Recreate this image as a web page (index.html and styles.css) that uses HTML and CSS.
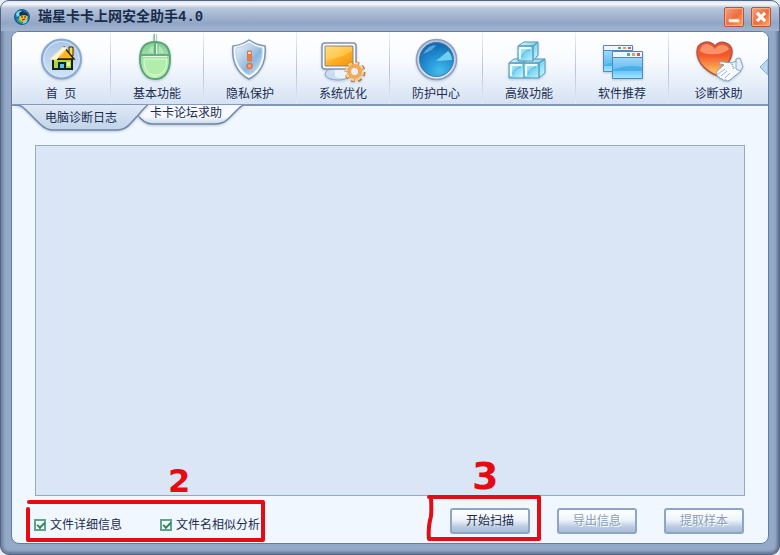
FILE: index.html
```html
<!DOCTYPE html>
<html lang="zh-CN">
<head>
  <meta charset="UTF-8" />
  <title>瑞星卡卡上网安全助手4.0</title>
  <link rel="stylesheet" href="styles.css">
</head>
<body>
  <div class="window">
    <header class="titlebar">
      <svg class="logo" viewBox="0 0 16 16">
        <circle cx="8" cy="8" r="7.5" fill="#1672b4" stroke="#175985" />
        <path d="M2 5Q4 1 8 2L6 6 3 8zM10 12l4-2-2 4-4 1z" fill="#65e5ef" />
        <path d="M5 8l3-3 4 1 2 2-2 4-4 1-3-2z" fill="#f0ba35" />
        <path d="M5 4l3-2 5 2 1 3-4-1-4 1z" fill="#17354a" />
        <path d="M3 10l4 1 1 3-3-1z" fill="#55bd4b" />
        <path d="M8 7v2M11 7v2M8 11l3-1" stroke="#4b2c17" />
      </svg>
      <h1>瑞星卡卡上网安全助手4.0</h1>
      <div class="win-buttons">
        <button type="button" aria-label="最小化">
          <svg viewBox="0 0 20 20"><path d="M4.5 12.500h11v3h-11z" fill="#fff" stroke="#ffd8b8" /></svg>
        </button>
        <button type="button" aria-label="关闭">
          <svg viewBox="0 0 20 20"><path d="M5.500 5.500l9 9M14.500 5.500l-9 9" stroke="#fff" stroke-width="3.500" /></svg>
        </button>
      </div>
    </header>

    <main class="panel">
      <nav class="toolbar">
        <a href="#home">
          <svg viewBox="0 0 50 50">
            <defs>
              <linearGradient id="ball" x2="0" y2="1"><stop stop-color="#a9c4e5" /><stop offset="1" stop-color="#d0e4fb" /></linearGradient>
            </defs>
            <circle cx="25.500" cy="27" r="19.500" fill="url(#ball)" stroke="#8ca8d0" stroke-width="2" />
            <circle cx="25.500" cy="27" r="17.500" fill="none" stroke="#d5e7fa" />
            <path d="M17 27h19v10H17z" fill="#a7da3c" stroke="#17210e" stroke-width="2" />
            <path d="M33 15h4v9h-4z" fill="#ffdc32" stroke="#35260b" />
            <path d="M28 15l10 12H21z" fill="#ffb71c" stroke="#2d250d" stroke-width="1.500" />
            <path d="M14 27l13-12 4 1-11 12z" fill="#fff5ce" stroke="#efe2bb" />
            <path d="M23 31h6v6h-6z" fill="#5cc2ed" stroke="#14202a" stroke-width="2" />
            <path d="M31 30h3v4h-3z" fill="#ecf99b" />
          </svg>
          <span>首&nbsp; 页</span>
        </a>
        <a href="#basic">
          <svg viewBox="0 0 50 50">
            <defs>
              <linearGradient id="mouse" x2="0" y2="1"><stop stop-color="#83cd99" /><stop offset="1" stop-color="#c9f6bf" /></linearGradient>
            </defs>
            <path d="M23 2v13" stroke="#8cb8a0" stroke-width="3" /><path d="M23.500 2v13" stroke="#e6fbed" />
            <path d="M8 27C8 15 14 10 23 10s15 5 15 17c0 13-6 20-15 20S8 39 8 27z" fill="url(#mouse)" stroke="#5ba676" stroke-width="2" />
            <path d="M12 27h23c0 11-5 16-12 16s-11-5-11-16z" fill="#b1eeac" stroke="#d7ffd0" />
            <path d="M9 23h28M23 11v12" stroke="#6aad7e" stroke-width="2" />
            <path d="M11 24.500h24M24.500 12v10" stroke="#eaffe8" />
            <path d="M16 20q1-5 5-6v7zM27 14q4 2 5 7h-5z" fill="#b9efbe" opacity=".7" />
          </svg>
          <span>基本功能</span>
        </a>
        <a href="#privacy">
          <svg viewBox="0 0 50 50">
            <defs>
              <linearGradient id="shield" x2="1" y2="1"><stop stop-color="#edf5fb" /><stop offset=".45" stop-color="#a8c7e4" /><stop offset=".6" stop-color="#8bb7df" /><stop offset="1" stop-color="#d1e9fa" /></linearGradient>
            </defs>
            <path d="M24 8q7 5 16 6 1 11-2 18-4 10-14 15Q14 42 10 32 7 25 8 14q9-1 16-6z" fill="#f8fcff" stroke="#7f96ae" stroke-width="1.500" />
            <path d="M24 11q6 4 13 5 1 9-2 15-3 8-11 12-8-4-11-12-3-6-2-15 7-1 13-5z" fill="url(#shield)" stroke="#bdd1e2" />
            <path d="M22.500 19h4v10h-4z" fill="#f27942" stroke="#dd7650" />
            <path d="M23 20h3v2h-3z" fill="#ffe0cf" />
            <circle cx="24.500" cy="34" r="2.500" fill="#f9a47f" stroke="#df7347" stroke-width="1.500" />
          </svg>
          <span>隐私保护</span>
        </a>
        <a href="#system">
          <svg viewBox="0 0 50 50">
            <defs>
              <linearGradient id="screen" x2="1" y2="1"><stop stop-color="#ffe39a" /><stop offset=".5" stop-color="#ffb129" /><stop offset="1" stop-color="#ef9209" /></linearGradient>
            </defs>
            <ellipse cx="20" cy="42" rx="13" ry="6" fill="#cbdcf2" stroke="#91a9c5" />
            <path d="M17 34h10l2 11q-6 2-12 0z" fill="#eaf4ff" />
            <rect x="4" y="11" width="34" height="26" rx="3" fill="#fbfcff" stroke="#8291ad" stroke-width="1.500" />
            <path d="M7 14h28v20H7z" fill="url(#screen)" stroke="#8d8780" />
            <path d="M8 28q13-1 26-9v-4H8z" fill="#ffd86b" opacity=".55" />
            <circle cx="37" cy="40" r="8.500" fill="none" stroke="#c87538" stroke-width="4" stroke-dasharray="3.700 2.980" />
            <circle cx="36.500" cy="39.500" r="8" fill="none" stroke="#ffd591" stroke-width="3" stroke-dasharray="3.500 2.780" />
            <circle cx="36.500" cy="39.500" r="5.500" fill="#e9f1fa" stroke="#f1aa5a" stroke-width="4" />
          </svg>
          <span>系统优化</span>
        </a>
        <a href="#guard">
          <svg viewBox="0 0 50 50">
            <defs>
              <radialGradient id="radar" cx=".6" cy=".85" r=".85"><stop stop-color="#45bdec" /><stop offset=".5" stop-color="#2393d6" /><stop offset="1" stop-color="#1265ae" /></radialGradient>
              <linearGradient id="rim" x2="0" y2="1"><stop stop-color="#b0c1dc" /><stop offset="1" stop-color="#e2e7f4" /></linearGradient>
            </defs>
            <circle cx="25.500" cy="27.500" r="20" fill="url(#rim)" stroke="#8d9fbd" stroke-width="1.500" />
            <circle cx="25.500" cy="27.500" r="17" fill="url(#radar)" stroke="#4779a9" />
            <path d="M25 29l12-10q4 4 4 9z" fill="#70cef2" />
            <path d="M12 22q5-9 13-9-2 5-13 9z" fill="#9cd8fb" opacity=".5" />
          </svg>
          <span>防护中心</span>
        </a>
        <a href="#advanced">
          <svg viewBox="0 0 50 50">
            <defs>
              <linearGradient id="ice" x2="1" y2="1"><stop stop-color="#eaffff" /><stop offset=".5" stop-color="#7bd5f3" /><stop offset="1" stop-color="#d5ffff" /></linearGradient>
            </defs>
            <g fill="url(#ice)" stroke="#5a98ba" stroke-linejoin="round">
              <path d="M5 31l5-4h12l-4 4zM5 31h15v15H5z" />
              <path d="M20 31l5-4h16l-6 4zM35 31l6-4v14l-6 5zM20 31h15v15H20z" />
              <path d="M14 14l6-4h14l-5 4zM29 14l5-4v13l-5 6zM14 14h15v15H14z" />
            </g>
            <path d="M16 16h11M7 33h11M22 33h11M16 17v10M7 34v10M22 34v10" stroke="#efffff" stroke-width="2" />
            <path d="M18 25q1-6 8-7M9 42q1-5 8-7M24 42q1-5 8-7" stroke="#56b7df" fill="none" />
          </svg>
          <span>高级功能</span>
        </a>
        <a href="#software">
          <svg viewBox="0 0 50 50">
            <defs>
              <linearGradient id="pane" x2="0" y2="1"><stop stop-color="#b6e2fa" /><stop offset=".65" stop-color="#65bdf2" /><stop offset="1" stop-color="#9feaff" /></linearGradient>
            </defs>
            <g stroke="#5488ba">
              <path d="M6.500 14.500h29v25h-29z" fill="url(#pane)" /><path d="M6.500 13.500h29v5h-29z" fill="#eff6ff" />
              <path d="M15.500 20.500h30v26h-30z" fill="url(#pane)" /><path d="M15.500 19.500h30v6h-30z" fill="#eff6ff" />
            </g>
            <path d="M16 38q12-6 29-3v4H16zM7 33q4-2 8-2v3H7z" fill="#3ba5e8" opacity=".65" />
            <path d="M21 15h3v2h-3zM30 21h3v3h-3z" fill="#55b078" />
            <path d="M26 15h3v2h-3zM35 21h3v3h-3z" fill="#e59c53" />
            <path d="M31 15h3v2h-3zM40 21h3v3h-3z" fill="#df5368" />
          </svg>
          <span>软件推荐</span>
        </a>
        <a href="#help">
          <svg viewBox="0 0 50 50">
            <defs>
              <linearGradient id="heart" x2="0" y2="1"><stop stop-color="#e9502f" /><stop offset=".4" stop-color="#f5592c" /><stop offset="1" stop-color="#ffd868" /></linearGradient>
            </defs>
            <path d="M24 44C13 40 3 31 3 20c0-10 11-13 18-6 6-7 17-3 17 6 0 8-8 16-14 24z" fill="url(#heart)" stroke="#b85442" stroke-width="1.500" />
            <path d="M6 19q1-8 8-7 4 1 7 5 4-5 9-4 4 1 5 4-5 5-14 5-9 1-15-3z" fill="#ffab82" opacity=".7" />
            <path d="M25 31q1-2 5-1l8 1 6-3 3 11-6 5-5 4q-3 2-4 0-3 1-4-1-3 0-3-2-3 0-2-3-2-1 1-4l6-5-3-1q-3 1-2-1z" fill="#f8fcff" stroke="#8299b5" />
            <path d="M24 42l7-5M27 44l6-5M31 46l5-5" stroke="#9fb3cb" fill="none" />
            <path d="M42 27l4-1 3 9-3 4-4-2z" fill="#e2effa" stroke="#8da2bb" />
            <path d="M38 32l2 5" stroke="#9aa9bb" stroke-width="2" stroke-dasharray="1 1" />
          </svg>
          <span>诊断求助</span>
        </a>
        <button type="button" class="more" aria-label="更多">
          <svg viewBox="0 0 9 18"><path d="M9 1L1 9l8 8z" fill="#b8d8ef" stroke="#86a8ca" /></svg>
        </button>
      </nav>

      <div class="tabs">
        <a href="#log" class="tab active">
          <svg viewBox="0 0 134 26">
            <defs>
              <linearGradient id="tab1" x2="0" y2="1"><stop stop-color="#dfe9f6" /><stop offset="1" stop-color="#c1d3ea" /></linearGradient>
            </defs>
            <path d="M0 0C7 0 9 2 12 5L25 18Q32 25 38 25H103Q111 25 117 18L126 8Q132 1 134 0z" fill="url(#tab1)" />
            <path d="M0 0C7 0 9 2 12 5L25 18Q32 25 38 25H103Q111 25 117 18L126 8Q132 1 134 0" fill="none" stroke="#74869f" stroke-width="1.500" />
          </svg>
          <span>电脑诊断日志</span>
        </a>
        <a href="#forum" class="tab">
          <svg viewBox="0 0 108 20">
            <defs>
              <linearGradient id="tab2" x2="0" y2="1"><stop stop-color="#f5f9ff" /><stop offset=".6" stop-color="#f7fbff" /><stop offset="1" stop-color="#c8d7e9" /></linearGradient>
            </defs>
            <path d="M9 0L1 9Q8 19 16 19H78Q87 19 92 14L101 5Q106 0 108 0z" fill="url(#tab2)" />
            <path d="M1 9Q8 19 16 19H78Q87 19 92 14L101 5Q106 0 108 0" fill="none" stroke="#74869f" stroke-width="1.500" />
          </svg>
          <span>卡卡论坛求助</span>
        </a>
      </div>

      <section class="log" aria-label="电脑诊断日志"></section>

      <footer class="actions">
        <div class="options">
          <label><input type="checkbox" checked>文件详细信息</label>
          <label><input type="checkbox" checked>文件名相似分析</label>
          <svg class="mark mark-options" viewBox="0 0 240 44">
            <path d="M3 3H237V41M2 10V41H236" />
          </svg>
          <span class="step step-two">2</span>
        </div>
        <div class="buttons">
          <div class="start">
            <button type="button">开始扫描</button>
            <svg class="mark mark-start" viewBox="0 0 116 48">
              <path d="M3 3H113V45H3Q2 36 4 26Q6 22 5 4" />
            </svg>
            <span class="step step-three">3</span>
          </div>
          <button type="button" disabled>导出信息</button>
          <button type="button" disabled>提取样本</button>
        </div>
      </footer>
    </main>
  </div>
</body>
</html>
```

FILE: styles.css
```css
* {
  box-sizing: border-box;
}
body {
  margin: 0;
  background: #e8eef5;
  color: #1b2c50;
  font: 12px/16px "Liberation Sans", "Noto Sans CJK SC", sans-serif;
}
a {
  color: inherit;
  text-decoration: none;
}
button {
  padding: 0;
  color: inherit;
  font: inherit;
}
svg {
  display: block;
}
.window {
  display: flex;
  flex-direction: column;
  min-height: 100vh;
  padding: 0 10px 10px;
  border: 1px solid #526582;
  border-radius: 9px;
  background: #94a8c7;
  box-shadow: inset 2px 0 3px #70839f, inset -2px 0 3px #60738f, inset 0 -2px 3px #667a98;
}

/* title bar */
.titlebar {
  display: flex;
  align-items: center;
  height: 30px;
  margin: 0 -10px;
  padding: 1px 8px 0 13px;
  border-radius: 8px 8px 0 0;
  background: linear-gradient(#dce4ef 0, #f5f8fc 3px, #b9c7dc 7px, #a4b5d1 15px, #91a5c6 22px, #a2b4d0 100%);
}
.logo {
  width: 16px;
  height: 16px;
}
h1 {
  flex: 1;
  margin: 0 0 0 8px;
  color: #182c4b;
  font: bold 14px/20px "Liberation Mono", "Noto Sans CJK SC", monospace;
}
.win-buttons {
  display: flex;
  gap: 7px;
}
.win-buttons button {
  width: 20px;
  height: 20px;
  border: 1px solid #b8523c;
  border-radius: 2px;
  background: linear-gradient(135deg, #f4a281, #ed6c3d 55%, #ffae62);
  box-shadow: inset 0 0 1px 1px #f9b48b;
}
.win-buttons svg {
  width: 18px;
  height: 18px;
}

.panel {
  display: flex;
  flex: 1;
  flex-direction: column;
  border: 1px solid #657c9f;
  border-radius: 8px;
  background: #f0f7ff;
}

/* toolbar */
.toolbar {
  position: relative;
  display: grid;
  grid-template-columns: 99fr repeat(6, 93fr) 99fr;
  height: 74px;
  border-bottom: 2px solid #8296b5;
  border-radius: 7px 7px 0 0;
  background: linear-gradient(#fff, #f8fbff 40%, #d5e2f3);
}
.toolbar a {
  display: flex;
  flex-direction: column;
  align-items: center;
  border-right: 1px solid;
  border-image: linear-gradient(#edf2f8, #b4c3d8, #e4edf8) 1;
}
.toolbar a:nth-child(8) {
  border-right: 0;
}
.toolbar a svg {
  width: 50px;
  height: 50px;
  filter: drop-shadow(0 1px 1px #b3c5dd);
}
.toolbar a span {
  margin-top: 4px;
}
.more {
  position: absolute;
  top: 26px;
  right: 0;
  border: 0;
  background: none;
}
.more svg {
  width: 9px;
  height: 18px;
}

/* tabs */
.tabs {
  display: flex;
  height: 40px;
  margin-top: -1px;
  padding-left: 2px;
}
.tab {
  position: relative;
  width: 108px;
  height: 20px;
  margin-left: -12px;
  text-align: center;
}
.tab.active {
  z-index: 1;
  width: 134px;
  height: 26px;
  margin-left: 0;
}
.tab svg {
  position: absolute;
  top: 0;
  left: 0;
  width: 100%;
  height: 100%;
  filter: drop-shadow(0 1px 1px #b3c5dd);
}
.tab span {
  position: relative;
  padding-right: 8px;
}
.tab.active span {
  padding: 0;
  line-height: 26px;
}

.log {
  flex: 1;
  margin: 0 23px;
  border: 1px solid #97a8c7;
  background: #dae5f5;
}

/* footer */
.actions {
  display: flex;
  justify-content: space-between;
  align-items: center;
  height: 47px;
  padding: 2px 24px 0 22px;
}
.options {
  position: relative;
  display: flex;
  gap: 38px;
  padding-top: 8px;
}
.options label {
  display: flex;
  align-items: center;
  gap: 4px;
}
.options input {
  appearance: none;
  width: 12px;
  height: 12px;
  margin: 0;
  border: 2px solid #5da58b;
  background: #f4fff8;
}
.options input:checked::before {
  content: "";
  display: block;
  width: 6px;
  height: 3px;
  margin: 1px;
  border: solid #328264;
  border-width: 0 0 2px 2px;
  transform: rotate(-45deg);
}
.buttons {
  display: flex;
  gap: 27px;
}
.start {
  position: relative;
}
.buttons button {
  display: block;
  width: 80px;
  height: 26px;
  border: 2px solid #8fa5c4;
  border-radius: 3px;
  background: linear-gradient(#fff, #eef4fb 45%, #bdcde2 75%, #a7bdd8);
}
.buttons button:disabled {
  color: #8b9eba;
  text-shadow: 1px 1px #fff;
}

/* red step marks */
.mark {
  position: absolute;
  fill: none;
  stroke: #e60b12;
  stroke-width: 4;
  stroke-linejoin: round;
  stroke-linecap: round;
  pointer-events: none;
}
.mark-options {
  top: -10px;
  left: -8px;
  width: 240px;
  height: 44px;
}
.mark-start {
  top: -14px;
  left: -24px;
  width: 116px;
  height: 48px;
}
.step {
  position: absolute;
  color: #e60b12;
  font-family: "DejaVu Sans", sans-serif;
  font-weight: bold;
  pointer-events: none;
}
.step-two {
  top: -44px;
  left: 134px;
  font-size: 32px;
  line-height: 32px;
}
.step-three {
  top: -51px;
  left: 22px;
  font-size: 38px;
  line-height: 38px;
}
```
